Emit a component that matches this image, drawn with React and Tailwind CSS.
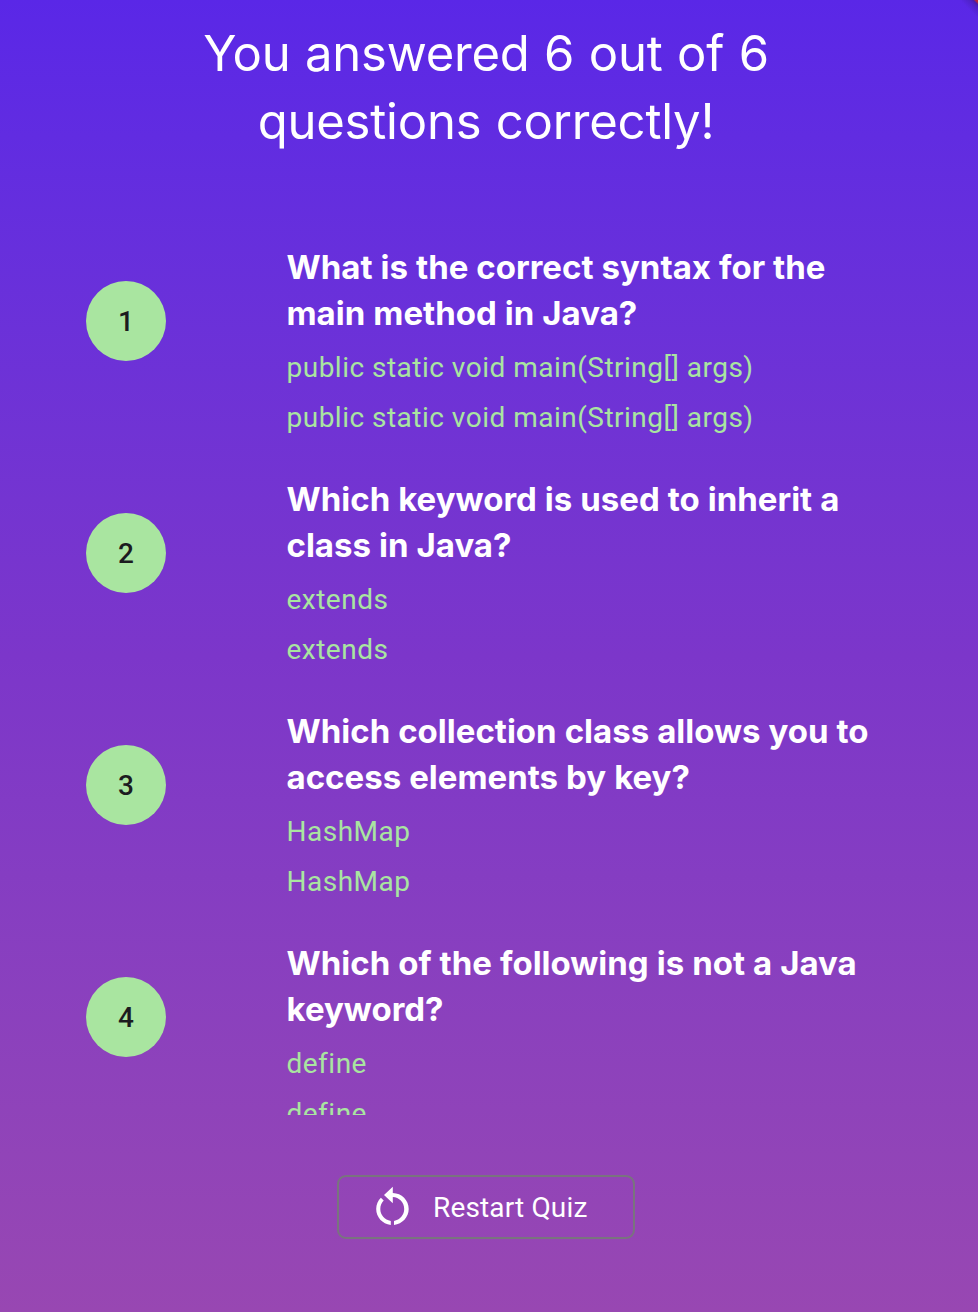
import React from 'react';

const questions = [
  { q: ['What is the correct syntax for the', 'main method in Java?'], a: 'public static void main(String[] args)' },
  { q: ['Which keyword is used to inherit a', 'class in Java?'], a: 'extends' },
  { q: ['Which collection class allows you to', 'access elements by key?'], a: 'HashMap' },
  { q: ['Which of the following is not a Java', 'keyword?'], a: 'define' },
];

function RestartIcon() {
  return (
    <svg viewBox="0 0 24 24" className="h-12 w-12 shrink-0" fill="white" aria-hidden="true">
      <path d="M12.4 5V1.9L8 6l4.4 4.1V7.05c3.1.1 5.7 2.7 5.7 5.95 0 2.97-2.1 5.43-5.1 5.95v2.02c4.2-.53 7.35-3.89 7.35-7.97 0-4.35-3.5-7.92-7.95-8zM6.15 13c0-1.65.67-3.1 1.71-4.19L6.44 7.39C5 8.84 4.1 10.79 4.1 13c0 4.08 3.05 7.44 7.3 7.97v-2.02c-3.1-.52-5.25-2.98-5.25-5.95z" />
    </svg>
  );
}

export default function App() {
  return (
    <main className="relative h-[1312px] w-[978px] overflow-hidden bg-linear-to-b from-[#5a27e7] via-[#7c36ca] to-[#9847b2] text-white">
      <div className="absolute top-0 right-0 h-5 w-5 bg-[linear-gradient(225deg,#c02a30_0px,#a82848_2px,#4a1ea8_3.5px,#4f22c8_6px,transparent_13px)]" />
      <h1 className="flex h-[156px] w-[972px] flex-col pt-[20px] text-center font-['Inter'] text-[49px] leading-[68px] font-normal tracking-[-0.2px] [word-spacing:0.9px]">
        <span>You answered 6 out of 6</span>
        <span>questions correctly!</span>
      </h1>
      <ol className="mt-[88px] flex h-[871px] flex-col overflow-hidden">
        {questions.map((item, i) => (
          <li key={i} className="flex h-[232px] shrink-0 pl-[86px]">
            <div className="mt-[37px] flex h-20 w-20 shrink-0 items-center justify-center rounded-full bg-[#a9e5a0] pt-px font-['Roboto'] text-[28px] font-medium text-[#1c1b1f]">{i + 1}</div>
            <div className="ml-[120.5px] whitespace-nowrap">
              <h2 className="flex flex-col font-['Inter'] text-[33px] leading-[46px] font-bold [word-spacing:0.2px]">
                <span>{item.q[0]}</span>
                <span>{item.q[1]}</span>
              </h2>
              <div className="mt-[7px] font-['Roboto'] text-[28px] leading-[50px] tracking-[0.49px] text-[#a9e5a0]">
                <p>{item.a}</p>
                <p>{item.a}</p>
              </div>
            </div>
          </li>
        ))}
      </ol>
      <button className="mt-[60px] ml-[337px] flex h-[64px] w-[298px] items-center rounded-[9px] border-2 border-[#79747e] pl-[29px] font-['Roboto'] text-[28px] font-normal tracking-[0.15px]">
        <RestartIcon />
        <span className="ml-[17px] pt-px whitespace-nowrap">Restart Quiz</span>
      </button>
    </main>
  );
}
